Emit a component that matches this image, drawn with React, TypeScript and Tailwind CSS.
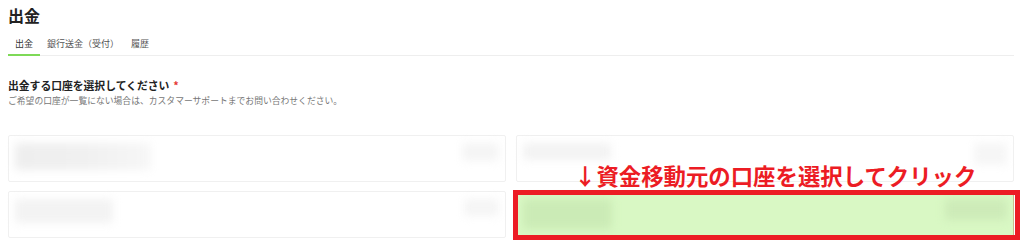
import React from 'react';

const jp = { fontFamily: '"Noto Sans CJK JP", "Noto Sans", sans-serif' };

type Blur = { w: number; h: number; tone: string };

type Account = {
  name: Blur;
  badge: Blur;
  selected?: boolean;
};

const ACCOUNTS: Account[] = [
  { name: { w: 136, h: 27, tone: 'bg-gradient-to-r from-[#eeeeee] via-[#f0f0f0] to-[#f7f7f7]' }, badge: { w: 37, h: 18, tone: 'bg-[#f5f5f5]' } },
  { name: { w: 88, h: 17, tone: 'bg-[#f3f3f3]' }, badge: { w: 33, h: 22, tone: 'bg-[#f6f6f6]' } },
  { name: { w: 98, h: 24, tone: 'bg-[#f3f3f3]' }, badge: { w: 35, h: 17, tone: 'bg-[#f5f5f5]' } },
  { name: { w: 89, h: 30, tone: 'bg-[#cbebb6]' }, badge: { w: 62, h: 21, tone: 'bg-[#cdebb8]' }, selected: true },
];

function AccountCard({ account }: { account: Account }) {
  return (
    <div
      className={`relative h-[47px] rounded-[2px] border flex justify-between items-start pl-[6px] pr-[6px] pt-[7px] ${
        account.selected ? 'bg-[#d9f8c4] border-[#cbb98c]' : 'bg-white border-[#f0f0f0]'
      }`}
    >
      <div
        className={`${account.name.tone} blur-[4px] rounded-[2px]`}
        style={{ width: account.name.w, height: account.name.h }}
      />
      <div
        className={`${account.badge.tone} blur-[4px] rounded-[2px]`}
        style={{ width: account.badge.w, height: account.badge.h }}
      />
      {account.selected && (
        <div className="absolute -left-[4px] -right-[7px] -top-[2px] -bottom-[3px] border-[5px] border-[#ec1c24] pointer-events-none" />
      )}
    </div>
  );
}

export default function App() {
  return (
    <div className="relative w-[1024px] h-[246px] bg-white overflow-hidden text-[#333333]" style={jp}>
      <div className="pl-[8px] pr-[10px]">
        <h1 className="pt-[4px] text-[16px] leading-[22px] font-bold text-[#222222]">出金</h1>

        {/* tabs */}
        <div className="mt-[11px] flex border-b border-[#eeeeee]">
          <div className="px-[7px] pb-[3px] text-[9px] leading-[14px] text-[#333333] border-b-2 border-[#7ed957] -mb-px">出金</div>
          <div className="px-[7px] pb-[3px] text-[9px] leading-[14px] text-[#555555]">銀行送金（受付）</div>
          <div className="px-[5px] pb-[3px] text-[9px] leading-[14px] text-[#555555]">履歴</div>
        </div>

        <h2 className="mt-[21px] text-[10.8px] leading-[16px] font-bold text-[#222222]">
          出金する口座を選択してください<span className="text-[#e53935] ml-[4px]">*</span>
        </h2>
        <p className="mt-[1px] text-[8.8px] leading-[14px] text-[#777777]">
          ご希望の口座が一覧にない場合は、カスタマーサポートまでお問い合わせください。
        </p>

        <div className="mt-[27px] grid grid-cols-2 gap-x-[10px] gap-y-[9px]">
          {ACCOUNTS.map((a, i) => (
            <AccountCard key={i} account={a} />
          ))}
        </div>
      </div>

      {/* annotation */}
      <div className="absolute left-[574px] top-[161px] text-[22.4px] leading-[28px] font-bold text-[#ec1c24] whitespace-nowrap">
        ↓資金移動元の口座を選択してクリック
      </div>
    </div>
  );
}
